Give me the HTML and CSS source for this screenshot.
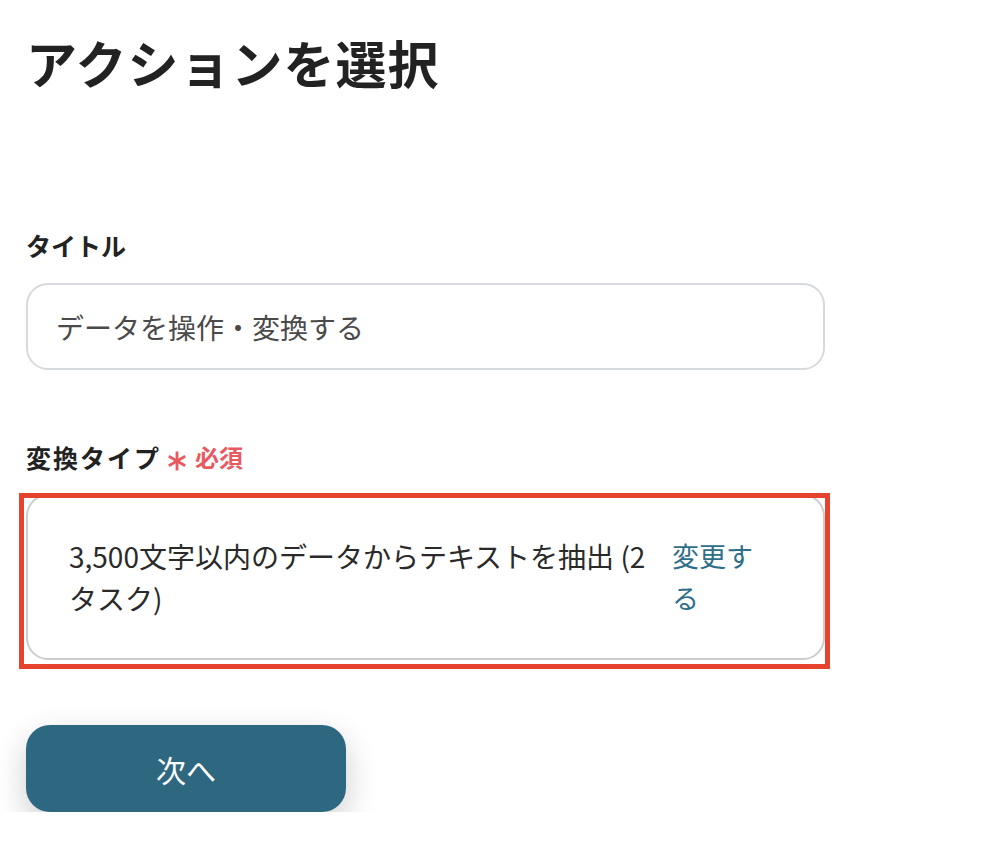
FILE: index.html
```html
<!DOCTYPE html>
<html lang="ja">
<head>
<meta charset="utf-8">
<title>アクションを選択</title>
<link rel="stylesheet" href="styles.css">
</head>
<body>
<main class="page">
  <h1 class="title">アクションを選択</h1>

  <div class="label">タイトル</div>
  <div class="input">データを操作・変換する</div>

  <div class="label label-req">
    <span class="label-type">変換タイプ</span>
    <svg class="ast" width="20" height="20" viewBox="0 0 20 20" aria-hidden="true">
      <g stroke="#e85a5f" stroke-width="2.8" stroke-linecap="butt">
        <line x1="10" y1="0.5" x2="10" y2="19.5"/>
        <line x1="1.8" y1="5.25" x2="18.2" y2="14.75"/>
        <line x1="1.8" y1="14.75" x2="18.2" y2="5.25"/>
      </g>
    </svg>
    <span class="req">必須</span>
  </div>

  <div class="card-wrap">
    <div class="card">
      <div class="card-text">3,500文字以内のデータからテキストを抽出 (2タスク)</div>
      <a class="card-link" href="#">変更する</a>
    </div>
    <div class="highlight"></div>
  </div>

  <button class="next" type="button">次へ</button>
</main>
</body>
</html>
```

FILE: styles.css
```css
* { box-sizing: border-box; }

html, body {
  margin: 0;
  padding: 0;
  background: #ffffff;
}

body {
  font-family: "Noto Sans CJK JP", "Noto Sans", sans-serif;
  color: #222222;
}

.page {
  padding-left: 26px;
  width: 826px;
  display: flex;
  flex-direction: column;
  align-items: flex-start;
}

.title {
  margin: 25px 0 0 0;
  font-size: 51px;
  line-height: 74px;
  font-weight: 700;
  color: #222222;
  letter-spacing: 1px;
}

.label {
  margin-top: 128px;
  font-size: 25px;
  line-height: 36px;
  font-weight: 700;
  color: #222222;
  display: flex;
  align-items: center;
}

.label-req {
  margin-top: 69px;
}

.label-type {
  letter-spacing: 2px;
}

.ast {
  margin-left: 6px;
  margin-top: 8px;
}

.req {
  margin-left: 8px;
  font-size: 24px;
  font-weight: 700;
  color: #e85a5f;
}

.input {
  margin-top: 20px;
  width: 799px;
  height: 87px;
  border: 2px solid #d6d9dd;
  border-radius: 22px;
  padding: 0 28px;
  display: flex;
  align-items: center;
  font-size: 28px;
  color: #4a4a4a;
}

.card-wrap {
  position: relative;
  margin-top: 19px;
  width: 799px;
}

.card {
  height: 166px;
  border: 2px solid #cccccc;
  border-radius: 22px;
  padding: 0 40px 0 41px;
  display: flex;
  align-items: center;
  gap: 3px;
}

.card-text {
  width: 600px;
  font-size: 28px;
  line-height: 42px;
  color: #2a2a2a;
}

.card-link {
  width: 90px;
  font-size: 27px;
  line-height: 42px;
  color: #2e6e8a;
  text-decoration: none;
}

.highlight {
  position: absolute;
  left: -7px;
  top: -1px;
  width: 811px;
  height: 176px;
  border: 5px solid #e5432e;
  pointer-events: none;
}

.next {
  margin-top: 65px;
  width: 320px;
  height: 87px;
  border: none;
  border-radius: 24px;
  background: #2e6780;
  color: #ffffff;
  font-family: "Noto Sans CJK JP", "Noto Sans", sans-serif;
  font-size: 30px;
  box-shadow: 0 12px 32px rgba(0, 0, 0, 0.2);
}
```
